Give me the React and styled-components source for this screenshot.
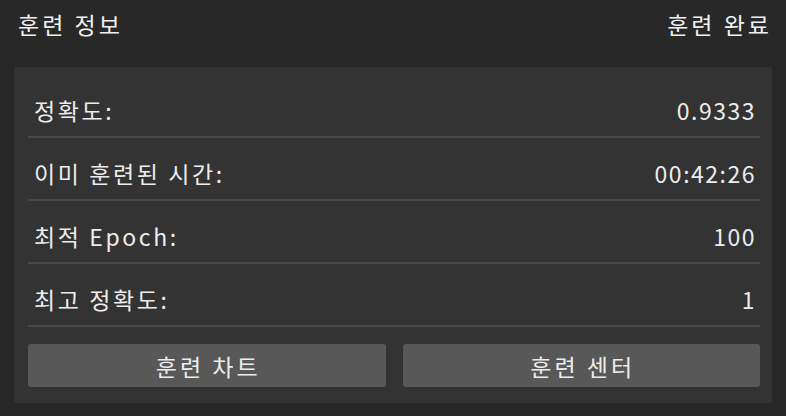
import styled, { createGlobalStyle } from "styled-components";

const GlobalStyle = createGlobalStyle`
    html, body {
        margin: 0;
        background: #282828;
    }
    body {
        font-family: "Noto Sans CJK KR", "Noto Sans", sans-serif;
        color: #ececec;
    }
`;

const rows = [
    { label: "정확도:", value: "0.9333" },
    { label: "이미 훈련된 시간:", value: "00:42:26" },
    { label: "최적 Epoch:", value: "100" },
    { label: "최고 정확도:", value: "1" },
];

const App = () => {
    return (
        <>
            <GlobalStyle />
            <Page>
                <Header>
                    <Title>훈련 정보</Title>
                    <Status>훈련 완료</Status>
                </Header>
                <Panel>
                    {rows.map((row) => (
                        <Row key={row.label}>
                            <Label>{row.label}</Label>
                            <Value>{row.value}</Value>
                        </Row>
                    ))}
                    <Buttons>
                        <Button>훈련 차트</Button>
                        <Button>훈련 센터</Button>
                    </Buttons>
                </Panel>
            </Page>
        </>
    );
};

export default App;

const Page = styled.div`
    width: 786px;
    height: 416px;
    box-sizing: border-box;
    padding: 0 14px 13px 14px;
    display: flex;
    flex-direction: column;
`;

const Header = styled.div`
    height: 67px;
    display: flex;
    align-items: flex-start;
    justify-content: space-between;
    padding: 8px 0 0 4px;
    box-sizing: border-box;
    font-size: 23px;
    letter-spacing: 3px;
    line-height: 32px;
`;

const Title = styled.div`
    color: #f0f0f0;
`;

const Status = styled.div`
    color: #f0f0f0;
`;

const Panel = styled.div`
    flex: 1;
    background: #333333;
    border-radius: 3px;
    padding: 8px 12px 16px 14px;
    display: flex;
    flex-direction: column;
`;

const Row = styled.div`
    height: 63px;
    box-sizing: border-box;
    padding: 9px 4px 0 6px;
    border-bottom: 2px solid #484848;
    display: flex;
    align-items: center;
    justify-content: space-between;
    font-size: 23px;
`;

const Label = styled.span`
    color: #ececec;
    letter-spacing: 2.6px;
`;

const Value = styled.span`
    color: #ececec;
    letter-spacing: 1.5px;
`;

const Buttons = styled.div`
    margin-top: 17px;
    display: grid;
    grid-template-columns: 1fr 1fr;
    gap: 17px;
`;

const Button = styled.button`
    height: 43px;
    border: none;
    border-radius: 3px;
    background: #585858;
    color: #ececec;
    font-family: "Noto Sans CJK KR", "Noto Sans", sans-serif;
    font-size: 23px;
    letter-spacing: 3px;
    padding: 0 0 0 3px;
`;
